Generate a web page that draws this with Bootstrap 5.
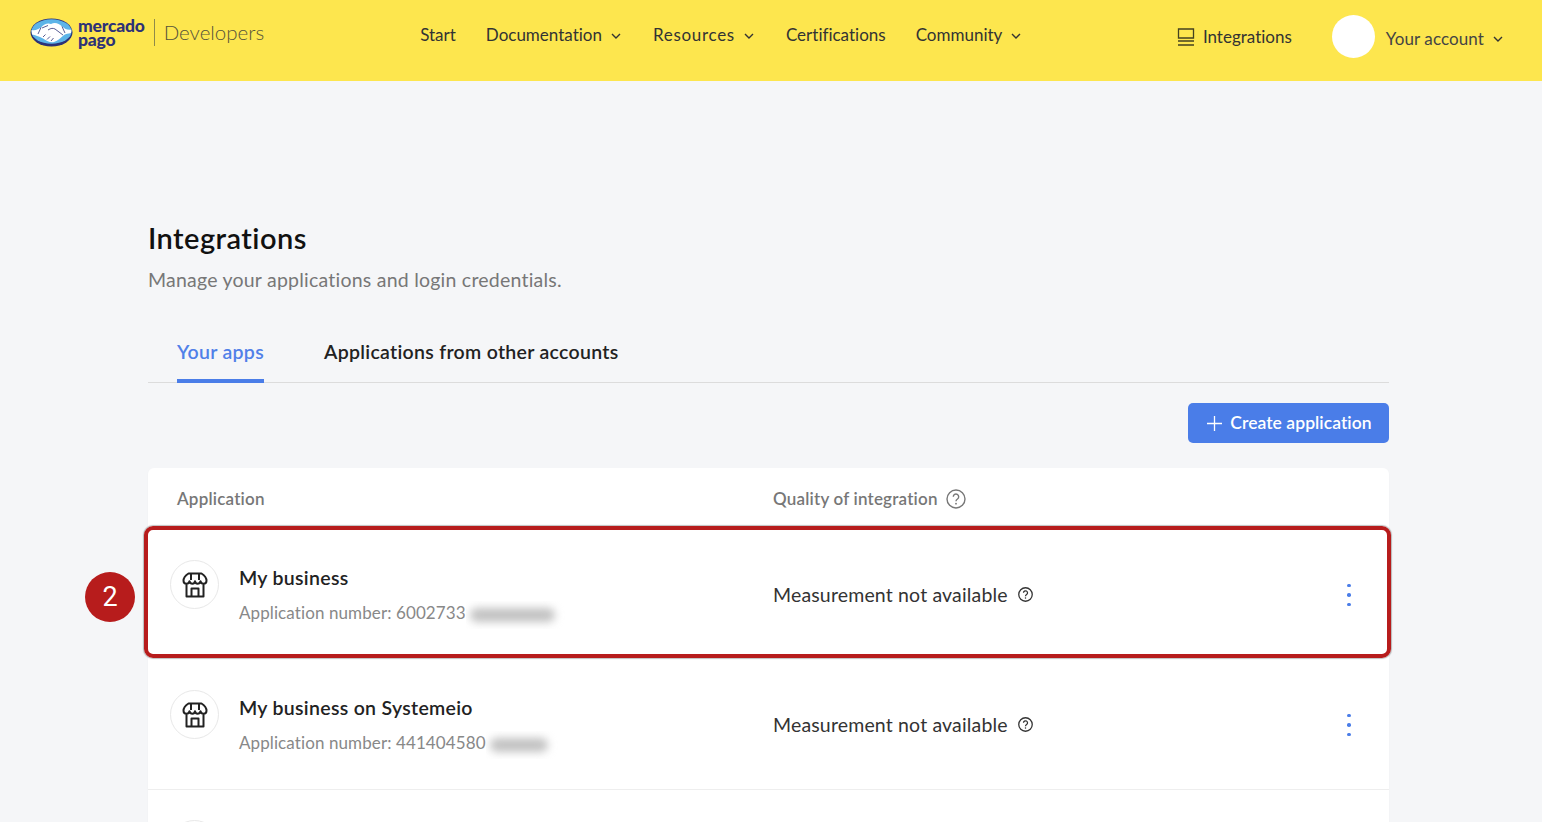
<!DOCTYPE html>
<html lang="en">
<head>
  <meta charset="UTF-8">
  <title>Integrations - Mercado Pago Developers</title>
  <link href="https://cdn.jsdelivr.net/npm/bootstrap@5.3.3/dist/css/bootstrap.min.css" rel="stylesheet">
  <style>
    html, body { height: 822px; overflow: hidden; }
    body { background: #f5f6f8; font-family: "Lato", "Liberation Sans", sans-serif; color: #222; font-variant-ligatures: none; }
    .mp-top { background: #fde64e; height: 81px; padding: 0 39px 0 30px; }
    .mp-word { font-weight: 900; color: #2d3277; font-size: 17.5px; line-height: 14px; letter-spacing: -.2px; margin-left: 5px; margin-top: 1px; }
    .mp-word div { height: 14px; }
    .mp-sep { width: 1px; height: 27px; background: #8f8a4a; margin: 0 9px 0 9px; }
    .mp-dev { font-size: 20.5px; color: #55533a; font-weight: 300; }
    .mp-links { margin-left: 156px; gap: 30px; padding-top: 1px; }
    .mp-link { font-size: 17px; color: #333; text-decoration: none; }
    .mp-link svg { margin-left: 9px; margin-right: 2px; }
    .mp-wide { letter-spacing: .7px; }
    .mp-right { margin-left: auto; }
    .mp-integ { font-size: 17px; color: #333; margin-top: 7px; }
    .mp-avatar { width: 43px; height: 43px; border-radius: 50%; background: #fff; margin: 7px 11px 0 40px; }
    .mp-acc { font-size: 17px; color: #444; margin-top: 11px; letter-spacing: .1px; }
    .mp-main { width: 1241px; margin-left: 148px; padding-top: 139px; }
    .mp-title { font-size: 29px; font-weight: 600; line-height: 36px; color: #111; margin: 0; letter-spacing: .45px; }
    .mp-sub { font-size: 19.5px; color: #777; line-height: 26px; margin: 11px 0 0; letter-spacing: .23px; }
    .mp-tabs { border-bottom: 1px solid #dcdcdc; height: 71px; margin-top: 19px; padding-left: 29px; gap: 60px; }
    .mp-tab { font-size: 19.5px; font-weight: 600; color: #222; text-decoration: none; padding-top: 27px; line-height: 26px; letter-spacing: .3px; }
    .mp-tab.on { color: #5080e8; border-bottom: 4px solid #4a7de8; border-radius: 3px 3px 0 0; height: 71px; }
    .mp-create { background: #4a7de8; color: #fff; font-size: 17.5px; font-weight: 600; height: 40px; width: 201px; border: 0; border-radius: 5px; margin-top: 20px; padding: 0 0 0 2px; letter-spacing: .05px; }
    .mp-panel { background: #fff; border-radius: 6px 6px 0 0; margin-top: 25px; box-shadow: 0 1px 2px rgba(0,0,0,.04); }
    .mp-head { height: 62px; padding-left: 29px; font-size: 17px; font-weight: 600; color: #777; letter-spacing: .2px; }
    .mp-c1 { width: 603px; flex: none; }
    .mp-rowline { position: relative; height: 130px; padding: 30px 0 0 22px; border-bottom: 1px solid #eee; }
    .mp-rowline.hl { border-bottom: 0; }
    .mp-ico { width: 49px; height: 49px; border: 1px solid #e8e8e8; border-radius: 50%; flex: none; }
    .mp-name { font-size: 19.5px; font-weight: 600; color: #222; line-height: 24px; margin-top: 6px; letter-spacing: .3px; }
    .mp-num { font-size: 17px; color: #888; line-height: 24px; margin-top: 11px; letter-spacing: .1px; }
    .mp-blur { display: inline-block; background: #fff; vertical-align: middle; margin: -4px 0; padding: 7px 12px 7px 4px; overflow: hidden; }
    .mp-blur i { display: block; height: 14px; background: #c2c2c2; border-radius: 7px; filter: blur(4px); }
    .mp-qual { font-size: 19.5px; color: #333; margin-top: 14px; height: 42px; width: 616px; letter-spacing: .16px; }
    .mp-qual > svg { margin-left: 10px; margin-bottom: 1px; }
    .mp-kebab { margin-left: auto; margin-right: 38px; width: 4px; }
    .mp-kebab span { display: block; width: 3.5px; height: 3.5px; border-radius: 50%; background: #4a7de8; margin: 6px 0; }
    .mp-hl { position: absolute; top: -4px; left: -4px; right: -2px; bottom: 2px; border: 4px solid #b71c1c; border-radius: 9px; box-shadow: 0 0 1px 1px rgba(0,0,0,.25); pointer-events: none; }
    .mp-step { position: absolute; top: 42px; left: -63px; width: 50px; height: 50px; border-radius: 50%; background: #b71c1c; color: #fff; font-family: "Roboto", sans-serif; font-size: 27px; padding-top: 1px; }
  </style>
</head>
<body>

  <nav class="mp-top d-flex align-items-center">
    <div class="d-flex align-items-center" style="margin-bottom:16px">
      <svg width="43" height="29" viewBox="0 0 43 29">
        <ellipse cx="21.5" cy="14.5" rx="21" ry="14" fill="#2d3277"/>
        <ellipse cx="21.5" cy="13.5" rx="20" ry="12.2" fill="#5db4e8"/>
        <path d="M1.500 12 C6 13 8 11 11 9.500 C14 6 18 4.500 21 6 C25 4 29 5.500 32 8.500 C35 11 38 12.500 41.500 11.500 L41 15 C38 15.500 36 16 34 17 C31 19.500 28 23 24 24 C20 25 16 22.500 13 20.500 C9 18.500 5 17 2 16.500Z" fill="#fff"/>
        <path d="M13 19 L15.500 16.500 M17 21.500 L20 18.500 M21 23 L23.500 20 M18 12 C21 10 23 10 25 11 L33 17 M12 10 L18 7.500 M11 9.500 L8 16 M32 8.500 L35 15" stroke="#2d3277" stroke-width=".8" fill="none"/>
      </svg>
      <div class="mp-word"><div>mercado</div><div>pago</div></div>
      <div class="mp-sep"></div>
      <div class="mp-dev">Developers</div>
    </div>

    <div class="mp-links d-flex align-items-center" style="margin-bottom:13px">
      <a class="mp-link" href="#">Start</a>
      <a class="mp-link" href="#">Documentation<svg width="10" height="6" viewBox="0 0 10 6"><path d="M1 1l4 4 4-4" fill="none" stroke="#333" stroke-width="1.4"/></svg></a>
      <a class="mp-link" href="#"><span class="mp-wide">Resources</span><svg width="10" height="6" viewBox="0 0 10 6"><path d="M1 1l4 4 4-4" fill="none" stroke="#333" stroke-width="1.4"/></svg></a>
      <a class="mp-link" href="#">Certifications</a>
      <a class="mp-link" href="#">Community<svg width="10" height="6" viewBox="0 0 10 6"><path d="M1 1l4 4 4-4" fill="none" stroke="#333" stroke-width="1.4"/></svg></a>
    </div>

    <div class="mp-right d-flex align-items-center" style="margin-bottom:15px">
      <div class="mp-integ d-flex align-items-center gap-2">
        <svg width="18" height="18" viewBox="0 0 18 18"><path d="M1.500 1h15v9h-15z M1 13h16 M1 17h16" fill="none" stroke="#44421f" stroke-width="1.300"/></svg>
        Integrations
      </div>
      <div class="mp-avatar"></div>
      <div class="mp-acc">Your account<svg width="10" height="6" viewBox="0 0 10 6" style="margin:0 0 2px 9px"><path d="M1 1l4 4 4-4" fill="none" stroke="#333" stroke-width="1.400"/></svg></div>
    </div>
  </nav>

  <main class="mp-main">
    <h1 class="mp-title">Integrations</h1>
    <p class="mp-sub">Manage your applications and login credentials.</p>

    <div class="mp-tabs d-flex">
      <a class="mp-tab on" href="#">Your apps</a>
      <a class="mp-tab" href="#">Applications from other accounts</a>
    </div>

    <div class="d-flex justify-content-end">
      <button type="button" class="mp-create d-flex align-items-center justify-content-center gap-2">
        <svg width="15" height="15" viewBox="0 0 15 15"><path d="M7.500 0v15M0 7.500h15" stroke="#fff" stroke-width="1.300"/></svg>
        Create application
      </button>
    </div>

    <div class="mp-panel">
      <div class="mp-head d-flex align-items-center">
        <div style="width:596px">Application</div>
        <div class="d-flex align-items-center gap-2">Quality of integration
          <svg width="20" height="20" viewBox="0 0 20 20"><circle cx="10" cy="10" r="9" fill="none" stroke="#777" stroke-width="1.400"/><path d="M7.300 7.800a2.700 2.700 0 1 1 4.200 2.200c-1 .7-1.500 1.100-1.500 2.200" fill="none" stroke="#777" stroke-width="1.400"/><circle cx="10" cy="14.700" r=".9" fill="#777"/></svg>
        </div>
      </div>

      <div class="mp-rowline hl d-flex">
        <div class="mp-c1 d-flex gap-3">
          <div class="mp-ico d-flex align-items-center justify-content-center">
            <svg width="26" height="26" viewBox="0 0 26 26"><path d="M6.500 1.500h13c3 1.800 5 4.500 5 7.300 0 1.700-1.300 2.900-3 2.900-1.500 0-2.700-1-3-2.400-.3 1.400-1.500 2.400-3 2.400s-2.200-1-2.500-2.400c-.3 1.400-1.200 2.400-2.500 2.400-1.500 0-2.700-1-3-2.400-.3 1.400-1.500 2.400-3 2.400-1.700 0-3-1.200-3-2.900 0-2.800 2-5.500 5-7.300z M4.500 11.500v13h17v-13 M9.500 24.500v-8h7v8 M9 2v6 M17 2v6" fill="none" stroke="#222" stroke-width="2" stroke-linejoin="round"/></svg>
          </div>
          <div class="ms-1">
            <div class="mp-name">My business</div>
            <div class="mp-num">Application number: 6002733<span class="mp-blur" style="width:101px"><i></i></span></div>
          </div>
        </div>
        <div class="mp-qual d-flex align-items-center">
          <span>Measurement not available</span>
          <svg width="15" height="15" viewBox="0 0 20 20"><circle cx="10" cy="10" r="9" fill="none" stroke="#333" stroke-width="1.700"/><path d="M7.300 7.800a2.700 2.700 0 1 1 4.200 2.200c-1 .7-1.500 1.100-1.500 2.200" fill="none" stroke="#333" stroke-width="1.700"/><circle cx="10" cy="14.700" r="1" fill="#333"/></svg>
          <div class="mp-kebab"><span></span><span></span><span></span></div>
        </div>
        <div class="mp-hl"></div>
        <div class="mp-step d-flex align-items-center justify-content-center">2</div>
      </div>

      <div class="mp-rowline d-flex">
        <div class="mp-c1 d-flex gap-3">
          <div class="mp-ico d-flex align-items-center justify-content-center">
            <svg width="26" height="26" viewBox="0 0 26 26"><path d="M6.500 1.500h13c3 1.800 5 4.500 5 7.300 0 1.700-1.300 2.900-3 2.900-1.500 0-2.700-1-3-2.400-.3 1.400-1.500 2.400-3 2.400s-2.200-1-2.500-2.400c-.3 1.400-1.200 2.400-2.500 2.400-1.500 0-2.700-1-3-2.400-.3 1.400-1.500 2.400-3 2.400-1.700 0-3-1.200-3-2.900 0-2.800 2-5.500 5-7.300z M4.500 11.500v13h17v-13 M9.500 24.500v-8h7v8 M9 2v6 M17 2v6" fill="none" stroke="#222" stroke-width="2" stroke-linejoin="round"/></svg>
          </div>
          <div class="ms-1">
            <div class="mp-name">My business on Systemeio</div>
            <div class="mp-num">Application number: 441404580<span class="mp-blur" style="width:74px"><i></i></span></div>
          </div>
        </div>
        <div class="mp-qual d-flex align-items-center">
          <span>Measurement not available</span>
          <svg width="15" height="15" viewBox="0 0 20 20"><circle cx="10" cy="10" r="9" fill="none" stroke="#333" stroke-width="1.700"/><path d="M7.300 7.800a2.700 2.700 0 1 1 4.200 2.200c-1 .7-1.500 1.100-1.500 2.200" fill="none" stroke="#333" stroke-width="1.700"/><circle cx="10" cy="14.700" r="1" fill="#333"/></svg>
          <div class="mp-kebab"><span></span><span></span><span></span></div>
        </div>
      </div>

      <div class="mp-rowline d-flex">
        <div class="mp-ico"></div>
      </div>
    </div>
  </main>

</body>
</html>
